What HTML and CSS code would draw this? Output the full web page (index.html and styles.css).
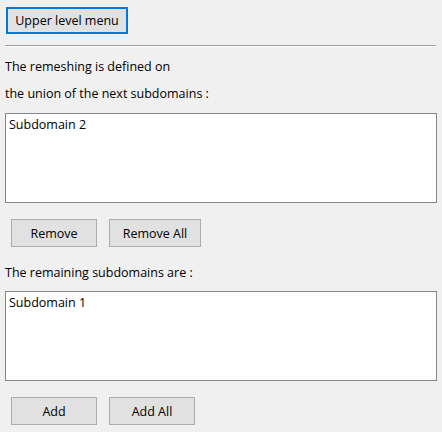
FILE: index.html
```html
<!DOCTYPE html>
<html>
<head>
<meta charset="utf-8">
<link rel="stylesheet" href="styles.css">
</head>
<body>
<div class="panel">
  <div class="top">
    <button class="btn btn-focus">Upper level menu</button>
  </div>
  <div class="sep"></div>
  <div class="label first">The remeshing is defined on</div>
  <div class="label">the union of the next subdomains :</div>
  <div class="listbox list1"><div class="item">Subdomain 2</div></div>
  <div class="row">
    <button class="btn w86">Remove</button>
    <button class="btn w92">Remove All</button>
  </div>
  <div class="label third">The remaining subdomains are :</div>
  <div class="listbox list2"><div class="item">Subdomain 1</div></div>
  <div class="row">
    <button class="btn w86">Add</button>
    <button class="btn w86">Add All</button>
  </div>
</div>
</body>
</html>
```
FILE: styles.css
```css
html, body {
  margin: 0;
  padding: 0;
  background: #f0f0f0;
}
body {
  font-family: "Open Sans", "Noto Sans", sans-serif;
  font-size: 12.5px;
  color: #000;
  width: 442px;
  height: 432px;
  overflow: hidden;
}
.panel {
  display: flex;
  flex-direction: column;
  padding: 7px 0 0 5px;
}
.top {
  padding-left: 1px;
}
.btn {
  font-family: inherit;
  font-size: 12.5px;
  color: #000;
  background: #e1e1e1;
  border: 1px solid #adadad;
  height: 28px;
  padding: 0;
  margin: 0;
  box-sizing: border-box;
  display: flex;
  align-items: center;
  justify-content: center;
}
.btn-focus {
  border: 2px solid #0078d7;
  width: 122px;
  height: 27px;
}
.w86 { width: 86px; }
.w92 { width: 92px; }
.sep {
  margin-top: 11px;
  width: 431px;
  height: 1px;
  background: #a0a0a0;
  border-bottom: 1px solid #ffffff;
}
.label {
  line-height: 27px;
  height: 27px;
  white-space: nowrap;
}
.label.first { margin-top: 6px; }
.label.third { margin-top: 12px; }
.listbox {
  width: 432px;
  height: 90px;
  box-sizing: border-box;
  background: #fff;
  border: 1px solid #828790;
  margin-top: 6px;
  padding: 2px 3px;
}
.list2 { margin-top: 5px; }
.item {
  line-height: 17px;
}
.row {
  display: flex;
  gap: 12px;
  margin-top: 16px;
  padding-left: 6px;
}
```
